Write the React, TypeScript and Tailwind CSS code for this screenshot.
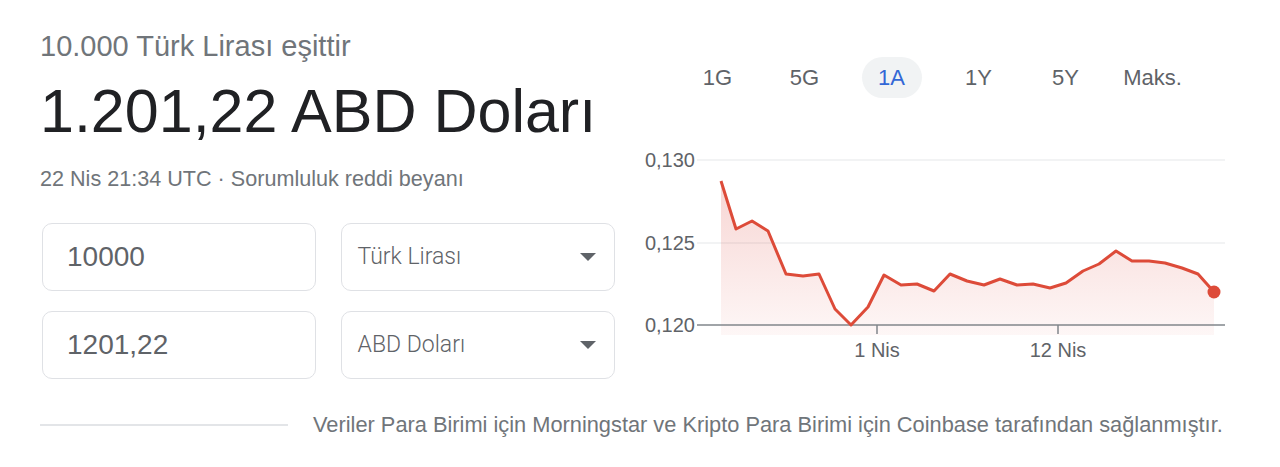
const tabs = ["1G", "5G", "1A", "1Y", "5Y", "Maks."];

// chart points, page coordinates
const pts: [number, number][] = [
  [721, 181], [736, 229], [752, 221], [768, 231], [786, 274], [803, 276],
  [819, 274], [835, 309], [851, 325], [868, 307], [884, 275], [901, 285],
  [917, 284], [934, 291], [950, 274], [967, 281], [984, 285], [1000, 279],
  [1017, 285], [1033, 284], [1050, 288], [1066, 283], [1083, 271], [1099, 264],
  [1116, 251], [1132, 261], [1149, 261], [1165, 263], [1182, 268], [1198, 274],
  [1214, 292],
];

function Chart() {
  const line = pts.map(([x, y], i) => `${i ? "L" : "M"}${x} ${y}`).join(" ");
  const area = `${line} L1214 335 L721 335 Z`;
  const last = pts[pts.length - 1];
  return (
    <svg width="600" height="225" viewBox="640 145 600 225" className="block">
      <defs>
        <linearGradient id="fill" x1="0" y1="0" x2="0" y2="1">
          <stop offset="0" stopColor="#d93025" stopOpacity="0.2" />
          <stop offset="1" stopColor="#d93025" stopOpacity="0.04" />
        </linearGradient>
      </defs>
      <line x1="697" y1="160" x2="1225" y2="160" stroke="#eeeff1" strokeWidth="1.5" />
      <line x1="697" y1="243" x2="1225" y2="243" stroke="#eeeff1" strokeWidth="1.5" />
      <path d={area} fill="url(#fill)" />
      <line x1="697" y1="325" x2="1225" y2="325" stroke="#80868b" strokeWidth="1.5" />
      <line x1="877" y1="325" x2="877" y2="334" stroke="#80868b" strokeWidth="1.5" />
      <line x1="1058" y1="325" x2="1058" y2="334" stroke="#80868b" strokeWidth="1.5" />
      <path d={line} fill="none" stroke="#dd4b39" strokeWidth="3" strokeLinejoin="round" />
      <circle cx={last[0]} cy={last[1]} r="6.5" fill="#dd4b39" />
      <g fill="#5f6368" fontSize="20" fontFamily="'Liberation Sans', Arial, sans-serif">
        <text x="695" y="167" textAnchor="end">0,130</text>
        <text x="695" y="250" textAnchor="end">0,125</text>
        <text x="695" y="332" textAnchor="end">0,120</text>
        <text x="877" y="357" textAnchor="middle">1 Nis</text>
        <text x="1058" y="357" textAnchor="middle">12 Nis</text>
      </g>
    </svg>
  );
}

function Field({ value }: { value: string }) {
  return (
    <div className="flex h-[68px] w-[274px] items-center rounded-[10px] border border-[#dfe1e5] px-[24px] text-[28px] text-[#5f6368]">
      {value}
    </div>
  );
}

function Select({ label }: { label: string }) {
  return (
    <div className="flex h-[68px] w-[275px] items-center justify-between rounded-[10px] border border-[#dfe1e5] pl-[16px] pr-[18px] font-['Roboto',sans-serif] text-[23px] font-light text-[#5f6368]">
      <span>{label}</span>
      <span className="h-0 w-0 border-x-[8px] border-t-[8px] border-x-transparent border-t-[#5f6368]" />
    </div>
  );
}

export default function App() {
  return (
    <div className="h-[467px] w-[1280px] overflow-hidden bg-white font-['Liberation_Sans',Arial,sans-serif]">
      <div className="flex px-[40px]">
        <div className="w-[575px] pt-[32px]">
          <div className="text-[29px] leading-[29px] text-[#70757a]">10.000 Türk Lirası eşittir</div>
          <div className="mt-[20px] text-[61px] leading-[61px] text-[#202124]">1.201,22 ABD Doları</div>
          <div className="mt-[26px] text-[21.6px] leading-[22px] text-[#70757a]">
            22 Nis 21:34 UTC · Sorumluluk reddi beyanı
          </div>
          <div className="mt-[33px] flex flex-col gap-[20px] pl-[2px]">
            <div className="flex gap-[25px]">
              <Field value="10000" />
              <Select label="Türk Lirası" />
            </div>
            <div className="flex gap-[25px]">
              <Field value="1201,22" />
              <Select label="ABD Doları" />
            </div>
          </div>
        </div>
        <div className="ml-[25px] w-[600px] pt-[57px]">
          <div className="flex w-[590px] justify-center gap-[27px]">
            {tabs.map((t) => (
              <button
                key={t}
                className={`flex h-[41px] w-[60px] items-center justify-center rounded-full text-[22px] ${
                  t === "1A" ? "bg-[#f1f3f4] text-[#3367d6]" : "text-[#5f6368]"
                }`}
              >
                {t}
              </button>
            ))}
          </div>
          <div className="mt-[47px]">
            <Chart />
          </div>
        </div>
      </div>
      <div className="mt-[35px] flex items-center px-[40px]">
        <div className="h-[2px] w-[248px] bg-[#e3e5e8]" />
        <div className="ml-[25px] text-[21.8px] leading-[22px] text-[#70757a]">
          Veriler Para Birimi için Morningstar ve Kripto Para Birimi için Coinbase tarafından sağlanmıştır.
        </div>
      </div>
    </div>
  );
}
